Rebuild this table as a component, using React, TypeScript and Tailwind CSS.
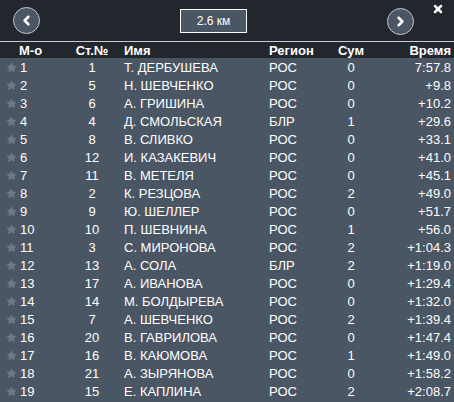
import { ChevronLeft, ChevronRight, X, Star } from 'lucide-react';

interface Row {
  place: number;
  bib: number;
  name: string;
  region: string;
  sum: number;
  time: string;
}

const rows: Row[] = [
  { place: 1, bib: 1, name: 'Т. ДЕРБУШЕВА', region: 'РОС', sum: 0, time: '7:57.8' },
  { place: 2, bib: 5, name: 'Н. ШЕВЧЕНКО', region: 'РОС', sum: 0, time: '+9.8' },
  { place: 3, bib: 6, name: 'А. ГРИШИНА', region: 'РОС', sum: 0, time: '+10.2' },
  { place: 4, bib: 4, name: 'Д. СМОЛЬСКАЯ', region: 'БЛР', sum: 1, time: '+29.6' },
  { place: 5, bib: 8, name: 'В. СЛИВКО', region: 'РОС', sum: 0, time: '+33.1' },
  { place: 6, bib: 12, name: 'И. КАЗАКЕВИЧ', region: 'РОС', sum: 0, time: '+41.0' },
  { place: 7, bib: 11, name: 'В. МЕТЕЛЯ', region: 'РОС', sum: 0, time: '+45.1' },
  { place: 8, bib: 2, name: 'К. РЕЗЦОВА', region: 'РОС', sum: 2, time: '+49.0' },
  { place: 9, bib: 9, name: 'Ю. ШЕЛЛЕР', region: 'РОС', sum: 0, time: '+51.7' },
  { place: 10, bib: 10, name: 'П. ШЕВНИНА', region: 'РОС', sum: 1, time: '+56.0' },
  { place: 11, bib: 3, name: 'С. МИРОНОВА', region: 'РОС', sum: 2, time: '+1:04.3' },
  { place: 12, bib: 13, name: 'А. СОЛА', region: 'БЛР', sum: 2, time: '+1:19.0' },
  { place: 13, bib: 17, name: 'А. ИВАНОВА', region: 'РОС', sum: 0, time: '+1:29.4' },
  { place: 14, bib: 14, name: 'М. БОЛДЫРЕВА', region: 'РОС', sum: 0, time: '+1:32.0' },
  { place: 15, bib: 7, name: 'А. ШЕВЧЕНКО', region: 'РОС', sum: 2, time: '+1:39.4' },
  { place: 16, bib: 20, name: 'В. ГАВРИЛОВА', region: 'РОС', sum: 0, time: '+1:47.4' },
  { place: 17, bib: 16, name: 'В. КАЮМОВА', region: 'РОС', sum: 1, time: '+1:49.0' },
  { place: 18, bib: 21, name: 'А. ЗЫРЯНОВА', region: 'РОС', sum: 0, time: '+1:58.2' },
  { place: 19, bib: 15, name: 'Е. КАПЛИНА', region: 'РОС', sum: 2, time: '+2:08.7' },
];

const cols = 'grid grid-cols-[18px_42px_64px_145px_61px_42px_1fr]';

export default function App() {
  return (
    <div
      className="w-[454px] h-[402px] overflow-hidden bg-[#4b5664] text-white text-[13px] leading-none"
      style={{ fontFamily: '"Liberation Sans", Arial, sans-serif' }}
    >
      <div className="relative h-[42px] bg-[#22272e] flex items-center border-b border-[#c9ccd0]">
        <div className="ml-[13px] w-[27px] h-[27px] rounded-full border-[1.5px] border-[#c4c7cb] bg-[#4b5664] flex items-center justify-center">
          <ChevronLeft className="w-[15px] h-[15px]" strokeWidth={4} color="#fff" />
        </div>
        <div className="ml-[140px] w-[67px] h-[24px] border border-white bg-[#4b5664] flex items-center justify-center text-[12px]">
          2.6 км
        </div>
        <div className="ml-[140px] mt-[2px] w-[27px] h-[27px] rounded-full border-[1.5px] border-[#c4c7cb] bg-[#4b5664] flex items-center justify-center">
          <ChevronRight className="w-[15px] h-[15px]" strokeWidth={4} color="#fff" />
        </div>
        <div className="absolute right-[10px] top-[3px]">
          <X className="w-[12px] h-[12px]" strokeWidth={5} color="#fff" />
        </div>
      </div>

      <div className={`${cols} h-[16px] items-center bg-[#22272e] font-bold pr-[3px]`}>
        <span />
        <span className="pl-[1px]">М-о</span>
        <span className="text-center">Ст.№</span>
        <span>Имя</span>
        <span>Регион</span>
        <span className="text-center">Сум</span>
        <span className="text-right">Время</span>
      </div>

      <div>
        {rows.map((r) => (
          <div key={r.place} className={`${cols} h-[18px] items-center pr-[3px]`}>
            <span className="flex justify-end pr-[1px]">
              <Star className="w-[11px] h-[11px]" fill="#6e7986" color="#6e7986" strokeWidth={1} />
            </span>
            <span className="pl-[2px]">{r.place}</span>
            <span className="text-center">{r.bib}</span>
            <span>{r.name}</span>
            <span>{r.region}</span>
            <span className="text-center">{r.sum}</span>
            <span className="text-right">{r.time}</span>
          </div>
        ))}
      </div>
    </div>
  );
}
